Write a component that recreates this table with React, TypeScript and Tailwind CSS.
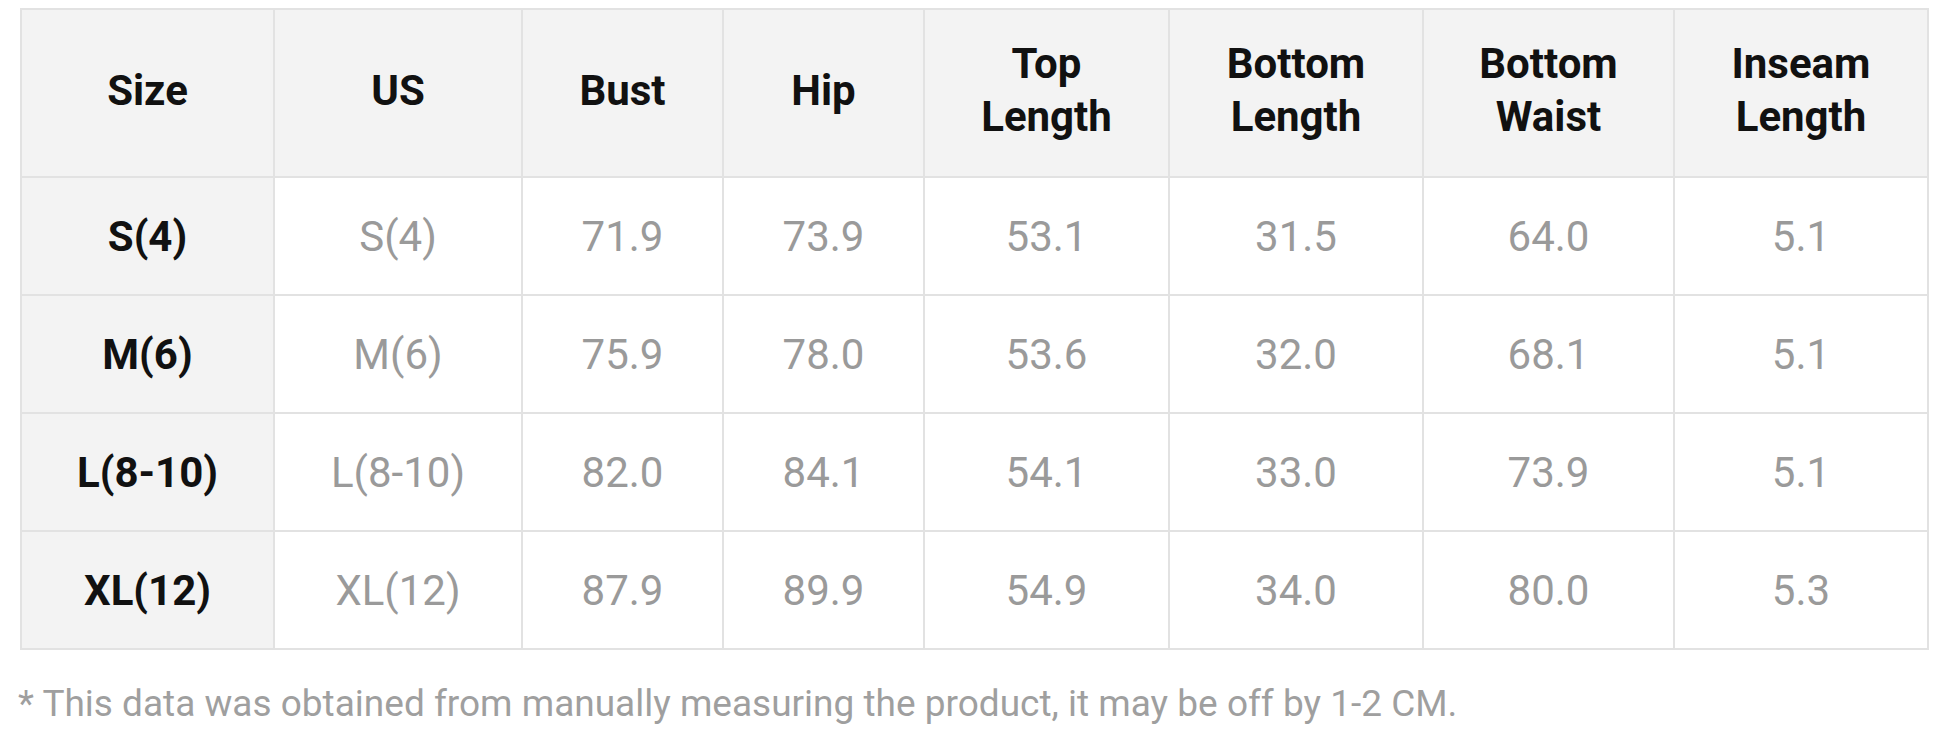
const headers = ["Size", "US", "Bust", "Hip", "Top Length", "Bottom Length", "Bottom Waist", "Inseam Length"];

const widths = [253, 248, 201, 201, 245, 254, 251, 254];

const rows = [
  ["S(4)", "S(4)", "71.9", "73.9", "53.1", "31.5", "64.0", "5.1"],
  ["M(6)", "M(6)", "75.9", "78.0", "53.6", "32.0", "68.1", "5.1"],
  ["L(8-10)", "L(8-10)", "82.0", "84.1", "54.1", "33.0", "73.9", "5.1"],
  ["XL(12)", "XL(12)", "87.9", "89.9", "54.9", "34.0", "80.0", "5.3"],
];

export default function App() {
  return (
    <div
      className="w-[1946px] h-[752px] bg-white pl-[20px] pt-[8px]"
      style={{ fontFamily: "Roboto, 'Liberation Sans', sans-serif" }}
    >
      <table className="table-fixed border-collapse w-[1907px]">
        <colgroup>
          {widths.map((w, i) => (
            <col key={i} style={{ width: w }} />
          ))}
        </colgroup>
        <thead>
          <tr className="h-[168px] bg-[#f3f3f3]">
            {headers.map((h) => (
              <th
                key={h}
                className="border-2 border-[#e2e2e2] text-[42px] leading-[53px] font-bold text-[#111] text-center align-middle px-6 pb-[6px]"
              >
                {h.split(" ").map((part, i) => (
                  <div key={i}>{part}</div>
                ))}
              </th>
            ))}
          </tr>
        </thead>
        <tbody>
          {rows.map((row) => (
            <tr key={row[0]} className="h-[118px]">
              {row.map((cell, i) => (
                <td
                  key={i}
                  className={
                    i === 0
                      ? "border-2 border-[#e2e2e2] bg-[#f3f3f3] text-[42px] font-bold text-[#111] text-center align-middle"
                      : "border-2 border-[#e2e2e2] bg-white text-[42px] text-[#9a9a9a] text-center align-middle"
                  }
                >
                  {cell}
                </td>
              ))}
            </tr>
          ))}
        </tbody>
      </table>

      <p className="mt-[32px] text-[37px] leading-[44px] text-[#9f9f9f] -ml-[2px]">
        * This data was obtained from manually measuring the product, it may be off by 1-2 CM.
      </p>
    </div>
  );
}
